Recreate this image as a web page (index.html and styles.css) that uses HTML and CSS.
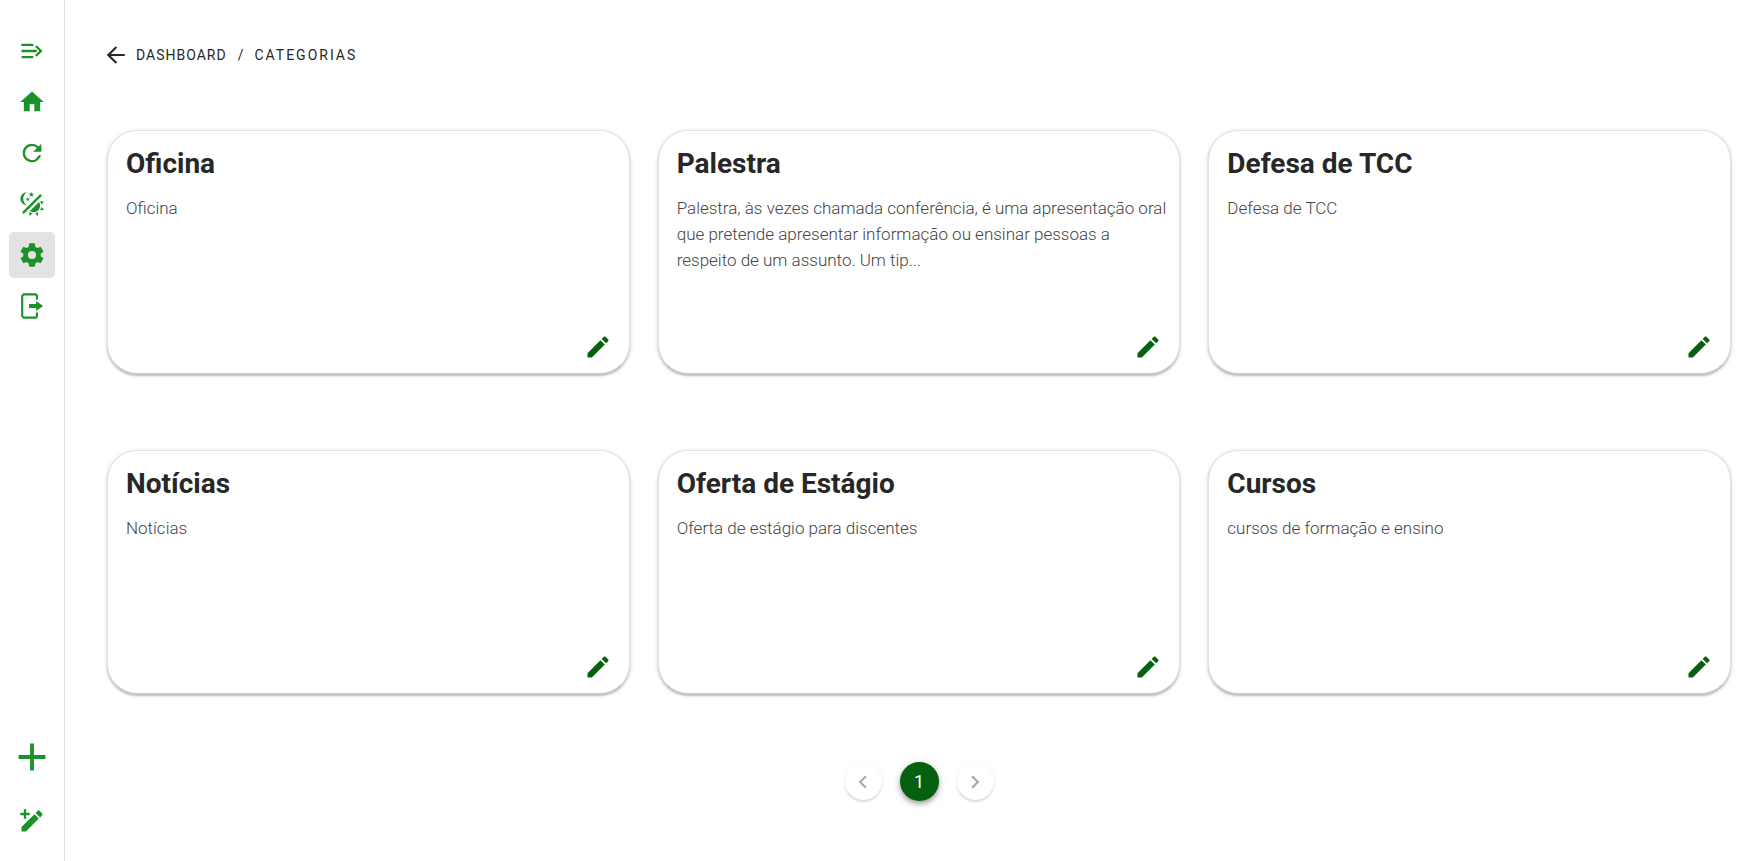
FILE: index.html
```html
<!DOCTYPE html>
<html lang="pt-BR">
<head>
<meta charset="utf-8">
<meta name="viewport" content="width=device-width, initial-scale=1">
<title>Categorias</title>
<link rel="stylesheet" href="styles.css">
</head>
<body>
<svg width="0" height="0" class="sprite" aria-hidden="true">
  <symbol id="pencil" viewBox="0 0 24 24"><path d="M20.71 7.04c.39-.39.39-1.04 0-1.41l-2.34-2.34c-.37-.39-1.02-.39-1.41 0l-1.84 1.83 3.75 3.75M3 17.25V21h3.75L17.81 9.93l-3.75-3.75z"/></symbol>
</svg>
<div class="app">
  <nav class="sidebar" aria-label="Menu principal">
    <div class="group">
      <button class="nav-btn" aria-label="Expandir menu"><svg class="icon" viewBox="0 0 24 24"><path d="M3.8 5.8h8.6a.9.9 0 0 1 0 2H3.8a.9.9 0 0 1 0-2zM3.8 11h11.6a.9.9 0 0 1 0 2H3.8a.9.9 0 0 1 0-2zM3.8 16.2h8.6a.9.9 0 0 1 0 2H3.8a.9.9 0 0 1 0-2zM16 7l-1.4 1.4 3.6 3.6-3.6 3.6L16 17l5-5z"/></svg></button>
      <button class="nav-btn" aria-label="Início"><svg class="icon" viewBox="0 0 24 24"><path d="M10 20v-6h4v6h5v-8h3L12 3 2 12h3v8z"/></svg></button>
      <button class="nav-btn" aria-label="Atualizar"><svg class="icon" viewBox="0 0 24 24"><path d="M17.65 6.35A7.96 7.96 0 0 0 12 4a8 8 0 1 0 7.73 10h-2.08A6 6 0 1 1 12 6c1.66 0 3.14.69 4.22 1.78L13 11h7V4z"/></svg></button>
      <button class="nav-btn" aria-label="Alternar tema"><svg class="icon" viewBox="0 0 24 24"><path d="M7.5 2C5.71 3.15 4.5 5.18 4.5 7.5s1.21 4.35 3.03 5.5A5.5 5.5 0 0 1 2 7.5 5.5 5.5 0 0 1 7.5 2m11.57 1.5 1.43 1.43L4.93 20.5 3.5 19.07zM12.89 5.93 11.41 5 9.97 6l.42-1.7L9 3.24l1.75-.12.58-1.65L12 3.1l1.73.03-1.35 1.13zM9.59 9.54l-1.16-.73-1.12.78.34-1.32-1.09-.83 1.36-.09.45-1.29.51 1.27 1.36.03-1.05.87zM19 13.5a5.5 5.5 0 0 1-5.5 5.5c-1.22 0-2.35-.4-3.26-1.07l7.69-7.69c.67.91 1.07 2.04 1.07 3.26m-4.4 6.58 2.77-1.15-.24 3.35zm4.33-2.7 1.15-2.77 2.2 2.54zm1.15-4.96-1.14-2.78 3.34.24zM9.63 18.93l2.77 1.15-2.53 2.19z"/></svg></button>
      <button class="nav-btn active" aria-label="Configurações" aria-current="page"><svg class="icon" viewBox="0 0 24 24"><path d="M12 15.5A3.5 3.5 0 0 1 8.5 12 3.5 3.5 0 0 1 12 8.5a3.5 3.5 0 0 1 3.5 3.5 3.5 3.5 0 0 1-3.5 3.5m7.43-2.53c.04-.32.07-.64.07-.97s-.03-.66-.07-1l2.11-1.63c.19-.15.24-.42.12-.64l-2-3.46c-.12-.22-.39-.31-.61-.22l-2.49 1c-.52-.39-1.06-.73-1.69-.98l-.37-2.65A.506.506 0 0 0 14 2h-4c-.25 0-.46.18-.5.42l-.37 2.65c-.63.25-1.17.59-1.69.98l-2.49-1c-.22-.09-.49 0-.61.22l-2 3.46c-.13.22-.07.49.12.64L4.57 11c-.04.34-.07.67-.07 1s.03.65.07.97l-2.11 1.66c-.19.15-.25.42-.12.64l2 3.46c.12.22.39.3.61.22l2.49-1.01c.52.4 1.06.74 1.69.99l.37 2.65c.04.24.25.42.5.42h4c.25 0 .46-.18.5-.42l.37-2.65c.63-.26 1.17-.59 1.69-.99l2.49 1.01c.22.08.49 0 .61-.22l2-3.46c.12-.22.07-.49-.12-.64z"/></svg></button>
      <button class="nav-btn" aria-label="Sair"><svg class="icon" viewBox="0 0 24 24"><path d="M16.2 6.4V3.4a1.4 1.4 0 0 0-1.4-1.4H4.9L3.6 3.3v17.4l1.3 1.3h9.9a1.4 1.4 0 0 0 1.4-1.4v-3" fill="none" stroke="currentColor" stroke-width="1.8"/><path d="M9.5 10.2h6V7.8l6 4.2-6 4.2v-2.4h-6z"/></svg></button>
    </div>
    <div class="group actions">
      <button class="nav-btn" aria-label="Adicionar"><svg class="icon large" viewBox="0 0 24 24"><path d="M19 13h-6v6h-2v-6H5v-2h6V5h2v6h6z"/></svg></button>
      <button class="nav-btn" aria-label="Criar categoria"><svg class="icon" viewBox="0 0 24 24"><path d="m20.7 7-1.8 1.9-3.8-3.8L17 3.3c.4-.4 1-.4 1.4 0l2.3 2.3c.4.4.4 1 0 1.4M3 17.2V21h3.8l11-11.1-3.7-3.7zM7 2v3h3v2H7v3H5V7H2V5h3V2z"/></svg></button>
    </div>
  </nav>
  <main class="content">
    <nav class="breadcrumb" aria-label="Trilha">
      <a href="#" class="back" aria-label="Voltar"><svg class="icon" viewBox="0 0 24 24"><path d="M19.5 11.1v1.8H7.6l5.4 5.4-1.3 1.3L4.1 12l7.6-7.6L13 5.7l-5.4 5.4z"/></svg></a>
      <a href="#" class="root">Dashboard</a>
      <span class="slash">/</span>
      <span class="current">Categorias</span>
    </nav>
    <section class="cards">
      <article class="card"><h2>Oficina</h2><p>Oficina</p><button class="edit" aria-label="Editar Oficina"><svg class="icon"><use href="#pencil"/></svg></button></article>
      <article class="card"><h2>Palestra</h2><p>Palestra, às vezes chamada conferência, é uma apresentação oral que pretende apresentar informação ou ensinar pessoas a respeito de um assunto. Um tip...</p><button class="edit" aria-label="Editar Palestra"><svg class="icon"><use href="#pencil"/></svg></button></article>
      <article class="card"><h2>Defesa de TCC</h2><p>Defesa de TCC</p><button class="edit" aria-label="Editar Defesa de TCC"><svg class="icon"><use href="#pencil"/></svg></button></article>
      <article class="card"><h2>Notícias</h2><p>Notícias</p><button class="edit" aria-label="Editar Notícias"><svg class="icon"><use href="#pencil"/></svg></button></article>
      <article class="card"><h2>Oferta de Estágio</h2><p>Oferta de estágio para discentes</p><button class="edit" aria-label="Editar Oferta de Estágio"><svg class="icon"><use href="#pencil"/></svg></button></article>
      <article class="card"><h2>Cursos</h2><p>cursos de formação e ensino</p><button class="edit" aria-label="Editar Cursos"><svg class="icon"><use href="#pencil"/></svg></button></article>
    </section>
    <nav class="pagination" aria-label="Paginação">
      <button class="page" disabled aria-label="Anterior"><svg viewBox="0 0 24 24"><path d="M15.41 16.58 10.83 12l4.58-4.59L14 6l-6 6 6 6z"/></svg></button>
      <button class="page selected" aria-current="page">1</button>
      <button class="page" disabled aria-label="Próxima"><svg viewBox="0 0 24 24"><path d="M8.59 16.58 13.17 12 8.59 7.41 10 6l6 6-6 6z"/></svg></button>
    </nav>
  </main>
</div>
</body>
</html>
```
FILE: styles.css
```css
* { box-sizing: border-box; }
body { margin: 0; background: #fff; color: #272727; font-family: Roboto, "Liberation Sans", sans-serif; }
button { border: 0; padding: 0; background: none; font: inherit; color: inherit; cursor: pointer; }
svg { display: block; fill: currentColor; }
.sprite { position: absolute; }
.icon { width: 28px; height: 28px; flex: none; }
.icon.large { width: 46px; height: 46px; }

.app { display: flex; min-height: 100vh; }
.sidebar { width: 65px; flex: none; display: flex; flex-direction: column; justify-content: space-between; align-items: flex-end; padding: 28px 9px 17px 0; border-right: 1px solid #dcdcdc; color: #1b9129; }
.group { display: flex; flex-direction: column; gap: 5px; }
.actions { gap: 18px; }
.nav-btn { width: 46px; height: 46px; display: grid; place-items: center; border-radius: 5px; }
.nav-btn.active { background: #e3e3e3; }

.content { flex: 1; min-width: 0; padding: 40px 24px 40px 42px; }
.breadcrumb { display: flex; align-items: center; height: 30px; font-size: 14px; line-height: 20px; text-transform: uppercase; }
.breadcrumb a { color: inherit; text-decoration: none; }
.back { margin-left: -5px; margin-right: 6px; }
.root { letter-spacing: 1px; }
.slash { margin: 0 11px; }
.current { letter-spacing: 2px; }

.cards { display: grid; grid-template-columns: repeat(3, minmax(0, 1fr)); gap: 76px 28px; margin-top: 60px; }
.card { min-height: 244px; display: flex; flex-direction: column; padding: 13px 12px 12px 18px; border: 1px solid #e2e2e2; border-bottom-color: #ccc; border-radius: 30px; background: #fff; box-shadow: 0 2px 2px rgba(0,0,0,.2), 0 1px 5px rgba(0,0,0,.12); }
.card h2 { margin: 0; font-size: 28px; line-height: 39px; font-weight: 700; }
.card p { margin: 12px 0 0; font-size: 17px; line-height: 26px; font-weight: 300; color: #444; }
.edit { margin: auto 5px 0 0; align-self: flex-end; color: #05610f; }

.pagination { display: flex; justify-content: center; align-items: center; gap: 18px; margin-top: 68px; }
.page { width: 37px; height: 37px; display: grid; place-items: center; border-radius: 50%; background: #fff; color: #aaa; font-size: 18px; box-shadow: 0 2px 2px rgba(0,0,0,.1), 0 1px 4px rgba(0,0,0,.08); }
.page svg { width: 26px; height: 26px; }
.page.selected { background: #05610f; color: #fff; width: 39px; height: 39px; box-shadow: 0 3px 4px rgba(0,0,0,.25), 0 2px 8px rgba(0,0,0,.18); }
```
